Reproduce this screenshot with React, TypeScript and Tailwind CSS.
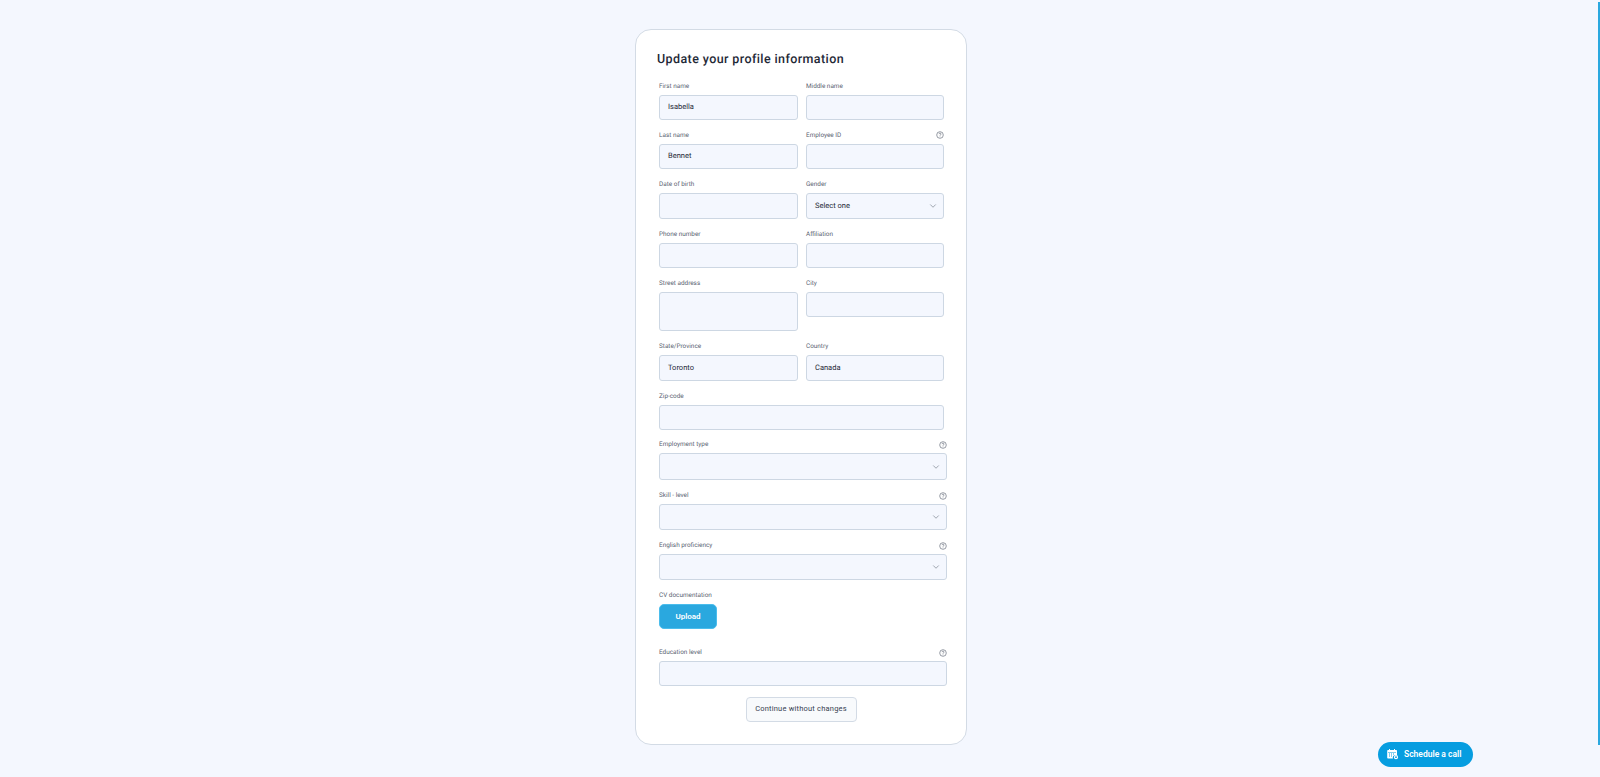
import { ChevronDown } from "lucide-react";

function HelpIcon() {
  return (
    <svg width="8" height="8" viewBox="0 0 8 8" fill="none" stroke="#6b7280" strokeWidth="0.7">
      <circle cx="4" cy="4" r="3.3" />
      <path d="M3 3.1c0-1.3 2-1.3 2 0 0 .8-1 .8-1 1.6" />
      <path d="M4 5.6v.5" />
    </svg>
  );
}

function Field({
  label,
  value,
  help,
  select,
  height = "h-[25px]",
}: {
  label: string;
  value?: string;
  help?: boolean;
  select?: boolean;
  height?: string;
}) {
  return (
    <div className="w-full">
      <div className="h-[18px] pt-[1px] flex items-center justify-between">
        <span className="text-[6.4px] leading-none text-[#5b6472]">{label}</span>
        {help && <HelpIcon />}
      </div>
      <div
        className={`flex items-center justify-between rounded-[3px] border border-[#cdd7e3] bg-[#f4f7fe] pl-[8px] pr-[5px] text-[7.5px] text-[#1f2937] ${height}`}
      >
        <span>{value}</span>
        {select && <ChevronDown size={10} strokeWidth={1.2} className="text-[#4b5563]" />}
      </div>
    </div>
  );
}

export default function App() {
  return (
    <div className="relative h-[777px] overflow-hidden bg-[#f4f7fe] pt-[29px] font-['Roboto',sans-serif] antialiased [text-rendering:geometricPrecision]">
      <div className="ml-[635px] h-[716px] w-[332px] rounded-[16px] border border-[#d3dbe5] bg-white pl-[23px] pt-[22px]">
        <h1 className="-ml-[2px] text-[12.5px] leading-[16px] font-medium tracking-[0.4px] text-[#1f2937]">
          Update your profile information
        </h1>
        <div className="mt-[8.5px] grid w-[285px] grid-cols-[139px_138px] items-start gap-x-[8px] gap-y-[6px]">
          <Field label="First name" value="Isabella" />
          <Field label="Middle name" />
          <Field label="Last name" value="Bennet" />
          <Field label="Employee ID" help />
          <Field label="Date of birth" height="h-[26px]" />
          <Field label="Gender" value="Select one" select height="h-[26px]" />
          <Field label="Phone number" />
          <Field label="Affiliation" />
          <Field label="Street address" height="h-[39px]" />
          <Field label="City" />
          <Field label="State/Province" value="Toronto" height="h-[26px]" />
          <Field label="Country" value="Canada" height="h-[26px]" />
        </div>
        <div className="mt-[6px] w-[285px]">
          <Field label="Zip-code" />
        </div>
        <div className="mt-[5.5px] flex w-[288px] flex-col gap-[6px]">
          <Field label="Employment type" select help height="h-[27px]" />
          <Field label="Skill - level" select help height="h-[26px]" />
          <Field label="English proficiency" select help height="h-[26px]" />
          <div className="flex flex-col items-start">
            <div className="flex h-[18px] items-center pt-[1px] text-[6.4px] leading-none text-[#5b6472]">
              CV documentation
            </div>
            <button className="h-[25px] w-[58px] rounded-[5px] border border-[#4bbdec] bg-[#2aa8df] text-[8px] font-semibold text-white">
              Upload
            </button>
          </div>
          <div className="mt-[8px]">
            <Field label="Education level" help />
          </div>
        </div>
        <div className="mt-[10.5px] flex w-[284px] justify-center">
          <button className="h-[25px] w-[111px] rounded-[4px] border border-[#d3dbe5] bg-[#f8fafc] text-[7.5px] tracking-[0.2px] text-[#374151]">
            Continue without changes
          </button>
        </div>
      </div>

      <button className="absolute left-[1378px] top-[742px] flex h-[25px] w-[95px] items-center gap-[5px] rounded-full bg-[#069de0] pl-[9px] text-[8.5px] font-semibold text-white">
        <svg width="12" height="11" viewBox="0 0 12 11">
          <path
            fill="white"
            d="M2 0h1v1h4V0h1v1h1.2c.5 0 .8.3.8.8V6H8a2.5 2.5 0 0 0-2 3.5H1c-.5 0-.8-.3-.8-.8V1.8c0-.5.3-.8.8-.8h1z"
          />
          <path fill="#069de0" d="M1 3h8v.6H1zM2 4.6h1v1H2zM4 4.6h1v1H4zM6 4.6h1v1H6zM2 6.6h1v1H2zM4 6.6h1v1H4z" />
          <circle cx="9" cy="8.2" r="1.5" fill="none" stroke="white" strokeWidth="1.2" />
        </svg>
        Schedule a call
      </button>
      <div className="absolute right-0 top-[2px] h-[743px] w-[2px] bg-[#2aa8df]" />
    </div>
  );
}
